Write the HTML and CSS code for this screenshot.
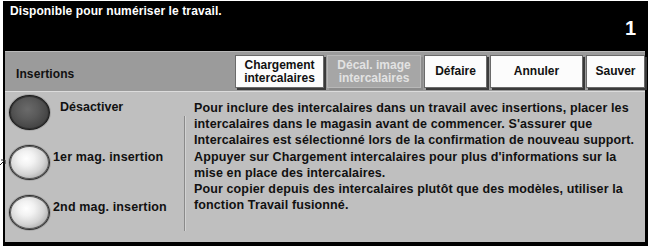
FILE: index.html
```html
<!DOCTYPE html>
<html lang="fr">
<head>
<meta charset="utf-8">
<title>Insertions</title>
<link rel="stylesheet" href="styles.css">
</head>
<body>
<div class="page">
  <svg class="pointer" width="6" height="10" viewBox="0 0 6 10"><path d="M0 6 L5 1 M5 1 L1 1 M5 1 L5 5" stroke="#222" stroke-width="1" fill="none"/></svg>
  <div class="screen">
    <div class="status">
      <div class="status-msg">Disponible pour numériser le travail.</div>
      <div class="status-num">1</div>
    </div>
    <div class="header">
      <div class="title">Insertions</div>
      <div class="actions">
        <button class="btn btn-load">Chargement<br>intercalaires</button>
        <button class="btn btn-disabled btn-shift">Décal. image<br>intercalaires</button>
        <button class="btn btn-undo">Défaire</button>
        <button class="btn btn-cancel">Annuler</button>
        <button class="btn btn-save">Sauver</button>
      </div>
    </div>
    <div class="body">
      <div class="options">
        <div class="option">
          <span class="radio radio-on"></span>
          <span class="label label-first">Désactiver</span>
        </div>
        <div class="option">
          <span class="radio"></span>
          <span class="label">1er mag. insertion</span>
        </div>
        <div class="option">
          <span class="radio"></span>
          <span class="label">2nd mag. insertion</span>
        </div>
      </div>
      <div class="divider"></div>
      <div class="desc">Pour inclure des intercalaires dans un travail avec insertions, placer les<br>intercalaires dans le magasin avant de commencer. S'assurer que<br>Intercalaires est sélectionné lors de la confirmation de nouveau support.<br>Appuyer sur Chargement intercalaires pour plus d'informations sur la<br>mise en place des intercalaires.<br>Pour copier depuis des intercalaires plutôt que des modèles, utiliser la<br>fonction Travail fusionné.</div>
    </div>
  </div>
</div>
</body>
</html>
```

FILE: styles.css
```css
* { box-sizing: border-box; }
html, body { margin: 0; padding: 0; background: #fff; }
body {
  width: 648px;
  height: 246px;
  overflow: hidden;
  font-family: "Liberation Sans", Arial, sans-serif;
  font-weight: bold;
  font-size: 12px;
}
.page {
  position: relative;
  width: 648px;
  height: 246px;
  padding: 1px 0 0 3px;
}
.pointer {
  position: absolute;
  left: 0;
  top: 159px;
}
.screen {
  width: 645px;
  height: 245px;
  background: #000;
  padding: 0 3px 4px 2px;
  display: flex;
  flex-direction: column;
}
.status {
  height: 51px;
  display: flex;
  justify-content: space-between;
  color: #fff;
  padding: 3px 9px 0 5px;
}
.status-msg {
  font-size: 12px;
  letter-spacing: 0.1px;
  line-height: 14px;
}
.status-num {
  font-size: 20px;
  line-height: 20px;
  margin-top: 14px;
}
.header {
  height: 41px;
  background: #9b9b9b;
  border-top: 1px solid #b9b9b9;
  border-bottom: 1px solid #dcdcdc;
  display: flex;
  align-items: flex-start;
}
.title {
  color: #111;
  padding: 15px 0 0 11px;
  line-height: 14px;
  letter-spacing: 0.1px;
}
.actions {
  margin-left: auto;
  display: flex;
  padding-top: 3px;
}
.btn {
  font-family: inherit;
  font-weight: bold;
  font-size: 12px;
  line-height: 13px;
  color: #111;
  background: #fcfcfc;
  border: 1px solid #6a6a6a;
  box-shadow: 2px 2px 0 #3a3a3a;
  height: 33px;
  padding: 0;
  margin-right: 3px;
  text-align: center;
}
.btn-load { width: 89px; }
.btn-shift { width: 94px; }
.btn-undo { width: 63px; }
.btn-cancel { width: 93px; }
.btn-save { width: 59px; margin-right: 0; }
.btn-disabled {
  background: #a6a6a6;
  color: #e2e2e2;
  border-color: #b8b8b8;
  box-shadow: 2px 2px 0 #8c8c8c;
}
.body {
  flex: 1;
  background: #bfbfbf;
  display: flex;
}
.options {
  width: 175px;
  display: flex;
  flex-direction: column;
  padding-left: 4px;
}
.option {
  height: 50px;
  display: flex;
  align-items: flex-start;
}
.radio {
  width: 41px;
  height: 35px;
  margin-top: 3px;
  border-radius: 50%;
  border: 1px solid #2e2e2e;
  background: radial-gradient(ellipse at 42% 38%, #ffffff 0%, #f2f2f2 25%, #d4d4d4 55%, #a8a8a8 80%, #7a7a7a 92%, #d0d0d0 100%);
  box-shadow: inset 0 0 0 1px #5a5a5a, 0 0 0 1px #a5a5a5;
  flex-shrink: 0;
}
.radio-on {
  background: radial-gradient(ellipse at 45% 40%, #6a6a6a 0%, #5a5a5a 35%, #444 70%, #2a2a2a 90%, #777 100%);
  border-color: #1a1a1a;
  box-shadow: inset 0 0 0 1px #333, 0 0 0 1px #a5a5a5;
}
.label {
  color: #111;
  font-size: 12.5px;
  letter-spacing: 0.15px;
  line-height: 14px;
  padding-top: 8px;
  margin-left: 3px;
  white-space: nowrap;
}
.label-first { margin-left: 10px; letter-spacing: 0; }
.divider {
  width: 2px;
  margin: 24px 0 11px 4px;
  border-left: 1px solid #8a8a8a;
  border-right: 1px solid #d2d2d2;
}
.desc {
  padding: 8px 0 0 8px;
  color: #111;
  font-size: 12.5px;
  letter-spacing: 0.12px;
  line-height: 16.2px;
  white-space: nowrap;
}
```
